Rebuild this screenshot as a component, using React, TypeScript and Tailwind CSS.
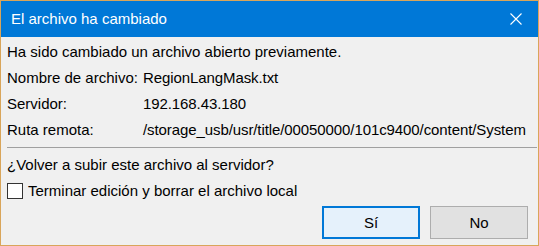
import React from 'react';

const rows = [
  { label: 'Nombre de archivo:', value: 'RegionLangMask.txt' },
  { label: 'Servidor:', value: '192.168.43.180' },
  { label: 'Ruta remota:', value: '/storage_usb/usr/title/00050000/101c9400/content/System' },
];

export default function App() {
  return (
    <div
      className="w-[539px] h-[246px] border border-[#d9a55a] bg-[#f0f0f0] flex flex-col overflow-hidden text-black"
      style={{ fontFamily: '"Segoe UI", "Liberation Sans", Arial, sans-serif' }}
    >
      {/* Title bar */}
      <div className="h-[36px] bg-[#0078d7] flex items-center justify-between pl-[10px] shrink-0">
        <span className="text-[15px] text-white">El archivo ha cambiado</span>
        <div className="w-[46px] h-full flex items-center justify-center mr-[-1px]">
          <svg width="12" height="12" viewBox="0 0 12 12" fill="none" stroke="white" strokeWidth="1.1">
            <path d="M0.5 0.5 L11.5 11.5 M11.5 0.5 L0.5 11.5" />
          </svg>
        </div>
      </div>

      {/* Body */}
      <div className="flex flex-col pl-[6px] pr-[1px] pt-[2px] text-[15px] leading-[26px]">
        <div>Ha sido cambiado un archivo abierto previamente.</div>
        {rows.map((r) => (
          <div key={r.label} className="flex">
            <span className="w-[136px] shrink-0">{r.label}</span>
            <span className="whitespace-nowrap tracking-[-0.09px]">{r.value}</span>
          </div>
        ))}
        <div className="h-px bg-[#a0a0a0] mt-[4px] mb-[4px]" />
        <div>¿Volver a subir este archivo al servidor?</div>
        <label className="flex items-center gap-[5px]">
          <span className="w-[16px] h-[16px] border border-[#333333] bg-white shrink-0" />
          <span>Terminar edición y borrar el archivo local</span>
        </label>
        <div className="flex justify-end gap-[10px] mt-[2px] pr-[9px]">
          <button className="w-[98px] h-[33px] border-2 border-[#0078d7] bg-[#e5f1fb] text-[15px] leading-none">
            Sí
          </button>
          <button className="w-[98px] h-[33px] border border-[#adadad] bg-[#e1e1e1] text-[15px] leading-none">
            No
          </button>
        </div>
      </div>
    </div>
  );
}
